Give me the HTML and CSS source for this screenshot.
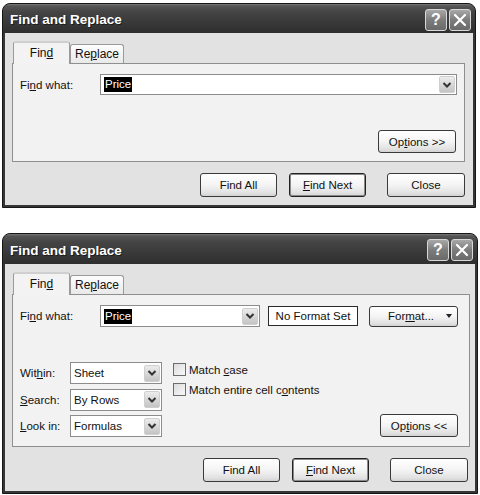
FILE: index.html
```html
<!DOCTYPE html>
<html>
<head>
<meta charset="utf-8">
<link rel="stylesheet" href="styles.css">
</head>
<body>
<div class="page">
  <div class="dialog d1">
    <div class="titlebar">
      <span class="title">Find and Replace</span>
      <div class="tbtns">
        <span class="tbtn">?</span>
        <span class="tbtn"><svg width="14" height="14" viewBox="0 0 14 14"><path d="M2 2 L12 12 M12 2 L2 12" stroke="#fff" stroke-width="2.2" stroke-linecap="round"/></svg></span>
      </div>
    </div>
    <div class="client">
      <div class="tabs">
        <div class="tab active">Fin<u>d</u></div>
        <div class="tab">Re<u>p</u>lace</div>
      </div>
      <div class="panel p1">
        <div class="findrow">
          <span class="lbl">Fi<u>n</u>d what:</span>
          <div class="combo wide">
            <span class="sel">Price</span>
            <span class="dd"><svg width="10" height="8" viewBox="0 0 10 8"><path d="M1.5 2 L5 5.5 L8.5 2" fill="none" stroke="#333" stroke-width="2"/></svg></span>
          </div>
        </div>
        <div class="optrow"><button class="btn opt">Op<u>t</u>ions &gt;&gt;</button></div>
      </div>
      <div class="actions">
        <button class="btn b-all">Find All</button>
        <button class="btn b-next default"><u>F</u>ind Next</button>
        <button class="btn b-close">Close</button>
      </div>
    </div>
  </div>

  <div class="dialog d2">
    <div class="titlebar">
      <span class="title">Find and Replace</span>
      <div class="tbtns">
        <span class="tbtn">?</span>
        <span class="tbtn"><svg width="14" height="14" viewBox="0 0 14 14"><path d="M2 2 L12 12 M12 2 L2 12" stroke="#fff" stroke-width="2.2" stroke-linecap="round"/></svg></span>
      </div>
    </div>
    <div class="client">
      <div class="tabs">
        <div class="tab active">Fin<u>d</u></div>
        <div class="tab">Re<u>p</u>lace</div>
      </div>
      <div class="panel p2">
        <div class="findrow">
          <span class="lbl">Fi<u>n</u>d what:</span>
          <div class="combo short">
            <span class="sel">Price</span>
            <span class="dd"><svg width="10" height="8" viewBox="0 0 10 8"><path d="M1.5 2 L5 5.5 L8.5 2" fill="none" stroke="#333" stroke-width="2"/></svg></span>
          </div>
          <div class="nofmt">No Format Set</div>
          <button class="btn fmt"><span>For<u>m</u>at...</span><span class="tri"></span></button>
        </div>
        <div class="lower">
          <div class="opts">
            <span class="lbl2">Wit<u>h</u>in:</span>
            <div class="combo sm"><span class="val">Sheet</span><span class="dd"><svg width="10" height="8" viewBox="0 0 10 8"><path d="M1.5 2 L5 5.5 L8.5 2" fill="none" stroke="#333" stroke-width="2"/></svg></span></div>
            <span class="lbl2"><u>S</u>earch:</span>
            <div class="combo sm"><span class="val">By Rows</span><span class="dd"><svg width="10" height="8" viewBox="0 0 10 8"><path d="M1.5 2 L5 5.5 L8.5 2" fill="none" stroke="#333" stroke-width="2"/></svg></span></div>
            <span class="lbl2"><u>L</u>ook in:</span>
            <div class="combo sm"><span class="val">Formulas</span><span class="dd"><svg width="10" height="8" viewBox="0 0 10 8"><path d="M1.5 2 L5 5.5 L8.5 2" fill="none" stroke="#333" stroke-width="2"/></svg></span></div>
          </div>
          <div class="checks">
            <label class="chk"><span class="box"></span><span>Match <u>c</u>ase</span></label>
            <label class="chk"><span class="box"></span><span>Match entire cell c<u>o</u>ntents</span></label>
          </div>
          <button class="btn opt2">Op<u>t</u>ions &lt;&lt;</button>
        </div>
      </div>
      <div class="actions">
        <button class="btn b-all">Find All</button>
        <button class="btn b-next default"><u>F</u>ind Next</button>
        <button class="btn b-close">Close</button>
      </div>
    </div>
  </div>
</div>
</body>
</html>
```

FILE: styles.css
```css
body {
  margin: 0;
  background: #fff;
  font-family: "Liberation Sans", Arial, sans-serif;
  font-size: 11.5px;
  color: #111;
}
u { text-underline-offset: 1px; }

.page {
  display: flex;
  flex-direction: column;
  gap: 25px;
  padding: 3px 0 0 2px;
}

.dialog {
  box-sizing: border-box;
  display: flex;
  flex-direction: column;
  background: #363636;
  border: 1px solid #161616;
  border-radius: 8px 8px 0 0;
  padding: 0 2px 2px;
}
.d1 { width: 474px; height: 205px; }
.d2 { width: 476px; height: 261px; }

.titlebar {
  flex: none;
  height: 29px;
  display: flex;
  align-items: center;
  justify-content: space-between;
  padding: 0 2px 0 7px;
  margin: 0 -2px;
  border-radius: 7px 7px 0 0;
  background: linear-gradient(#7a7a7a 0, #555 2px, #444 8px, #3a3a3a 60%, #2e2e2e 100%);
}
.d2 .titlebar { height: 30px; }
.title {
  color: #fff;
  font-weight: bold;
  font-size: 13.5px;
  text-shadow: 1px 1px 0 #1c1c1c;
  margin-top: 2px;
}
.tbtns { display: flex; gap: 2px; margin-right: 2px; margin-top: 2px; }
.tbtn {
  box-sizing: border-box;
  width: 22px;
  height: 22px;
  border: 1px solid #d8d8d8;
  border-radius: 3px;
  background: linear-gradient(#a8a8a8, #7c7c7c 50%, #6a6a6a);
  color: #fff;
  font-weight: bold;
  font-size: 16px;
  display: flex;
  align-items: center;
  justify-content: center;
}

.client {
  flex: 1;
  background: #e2e2e2;
  padding: 8px 8px 8px 7px;
  display: flex;
  flex-direction: column;
}
.d2 .client { padding-right: 5px; }

.tabs {
  display: flex;
  align-items: flex-end;
  height: 23px;
  margin-left: 1px;
  margin-bottom: -1px;
  position: relative;
  z-index: 1;
}
.tab {
  box-sizing: border-box;
  height: 19px;
  margin-bottom: 1px;
  border: 1px solid #9a9a9a;
  border-bottom: none;
  border-radius: 3px 3px 0 0;
  background: linear-gradient(#fdfdfd, #e9e9e9);
  width: 54px;
  display: flex;
  align-items: center;
  justify-content: center;
  font-size: 12px;
}
.tab.active {
  height: 23px;
  margin-bottom: 0;
  width: 57px;
  background: #f3f3f3;
  border-top: 2px solid #cfcfcf;
  padding-bottom: 1px;
}

.panel {
  box-sizing: border-box;
  border: 1px solid #8f8f8f;
  background: #f2f2f2;
}
.p1 {
  height: 99px;
  padding: 10px 7px 8px 7px;
  display: flex;
  flex-direction: column;
  justify-content: space-between;
}
.p2 {
  height: 153px;
  padding: 10px 11px 9px 7px;
}

.findrow { display: flex; align-items: center; }
.lbl { width: 80px; flex: none; }

.combo {
  box-sizing: border-box;
  background: #fff;
  border: 1px solid #8c8c8c;
  display: flex;
  align-items: center;
  padding-left: 3px;
}
.combo.wide { flex: 1; height: 21px; }
.combo.short { width: 160px; height: 22px; }
.combo.sm { width: 92px; height: 22px; }
.sel {
  background: #000;
  color: #fff;
  padding: 1px 1px;
  line-height: 13px;
}
.dd {
  box-sizing: border-box;
  margin-left: auto;
  margin-right: 1px;
  width: 16px;
  height: 17px;
  border: 1px solid #cfcfcf;
  border-radius: 2px;
  background: linear-gradient(#ececec, #c4c4c4);
  display: flex;
  align-items: center;
  justify-content: center;
}

.nofmt {
  box-sizing: border-box;
  width: 90px;
  height: 20px;
  margin-left: 8px;
  border: 1px solid #2a2a2a;
  background: #fff;
  display: flex;
  align-items: center;
  justify-content: center;
}

.btn {
  box-sizing: border-box;
  font: inherit;
  color: #111;
  height: 23px;
  border: 1px solid #3a3a3a;
  border-radius: 3px;
  background: linear-gradient(#ffffff, #f4f4f4 50%, #e2e2e2 85%, #d2d2d2);
  padding: 0;
  display: flex;
  align-items: center;
  justify-content: center;
}
.btn.default { box-shadow: inset 0 0 0 1px #8a8a8a; border-color: #222; }
.fmt {
  width: 89px;
  height: 21px;
  margin-left: 11px;
  justify-content: space-between;
  padding: 0 5px 0 18px;
}
.tri {
  width: 0;
  height: 0;
  border-left: 3px solid transparent;
  border-right: 3px solid transparent;
  border-top: 4px solid #222;
}

.optrow { display: flex; justify-content: flex-end; }
.opt { width: 78px; margin-right: 1px; }

.lower {
  display: flex;
  align-items: flex-start;
  margin-top: 35px;
}
.opts {
  display: grid;
  grid-template-columns: 50px 92px;
  row-gap: 4.5px;
  align-items: center;
}
.checks {
  display: flex;
  flex-direction: column;
  gap: 7px;
  margin-left: 11px;
  margin-top: 1px;
}
.chk { display: flex; align-items: center; height: 13px; }
.box {
  box-sizing: border-box;
  width: 13px;
  height: 13px;
  border: 1px solid #6c6c6c;
  background: linear-gradient(135deg, #dcdcdc, #f8f8f8);
  margin-right: 3px;
}
.opt2 {
  width: 78px;
  margin-left: auto;
  align-self: flex-end;
}

.actions {
  display: flex;
  justify-content: flex-end;
  margin-top: 11px;
}
.actions .btn { height: 24px; width: 77px; }
.b-all { margin-right: 12px; }
.b-next { margin-right: 21px; }
.actions .b-close { width: 78px; }
.d2 .actions { padding-right: 2px; }
```
